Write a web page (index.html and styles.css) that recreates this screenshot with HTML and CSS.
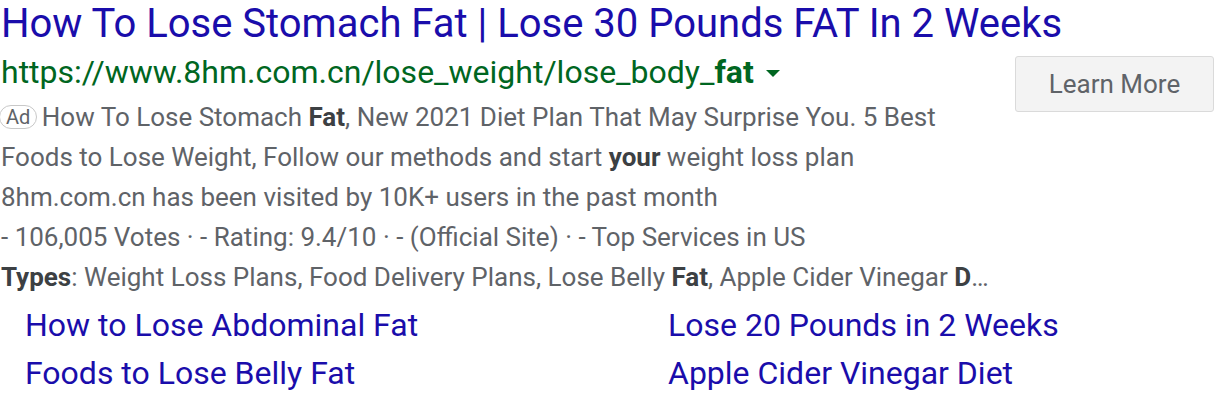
FILE: index.html
```html
<!DOCTYPE html>
<html>
<head>
<meta charset="utf-8">
<link rel="stylesheet" href="styles.css">
</head>
<body>
<div class="ad">
  <a class="title" href="#">How To Lose Stomach Fat | Lose 30 Pounds FAT In 2 Weeks</a>
  <div class="body">
    <div class="main">
      <div class="url">https://www.8hm.com.cn/lose_weight/lose_body_<b>fat</b><span class="caret"></span></div>
      <div class="desc">
        <p class="line"><span class="badge">Ad</span> How To Lose Stomach <b>Fat</b>, New 2021 Diet Plan That May Surprise You. 5 Best<br>Foods to Lose Weight, Follow our methods and start <b>your</b> weight loss plan</p>
        <p class="line">8hm.com.cn has been visited by 10K+ users in the past month</p>
        <p class="line">- 106,005 Votes · - Rating: 9.4/10 · - (Official Site) · - Top Services in US</p>
        <p class="line"><b>Types</b>: Weight Loss Plans, Food Delivery Plans, Lose Belly <b>Fat</b>, Apple Cider Vinegar <b>D</b>…</p>
      </div>
    </div>
    <button class="cta">Learn More</button>
  </div>
  <div class="sitelinks">
    <a href="#">How to Lose Abdominal Fat</a>
    <a href="#">Lose 20 Pounds in 2 Weeks</a>
    <a href="#">Foods to Lose Belly Fat</a>
    <a href="#">Apple Cider Vinegar Diet</a>
  </div>
</div>
</body>
</html>
```
FILE: styles.css
```css
html, body {
  margin: 0;
  padding: 0;
  background: #fff;
}
body {
  font-family: Roboto, "Liberation Sans", sans-serif;
}
.ad {
  padding: 0 0 0 1px;
}
.title {
  display: block;
  color: #1a0dab;
  font-size: 40px;
  line-height: 48px;
  text-decoration: none;
  white-space: nowrap;
}
.body {
  display: flex;
  align-items: flex-start;
  justify-content: space-between;
  margin-top: -1px;
}
.url {
  color: #006621;
  font-size: 32px;
  line-height: 50px;
  display: flex;
  align-items: center;
  white-space: nowrap;
}
.url b { font-weight: 700; }
.caret {
  width: 0;
  height: 0;
  border-left: 7px solid transparent;
  border-right: 7px solid transparent;
  border-top: 7px solid #006621;
  margin-left: 12px;
  margin-top: 3px;
}
.desc { color: #5f6368; font-size: 26px; }
.line {
  margin: 0;
  line-height: 40px;
  white-space: nowrap;
}
.line b { color: #3c4043; font-weight: 700; }
.badge {
  display: inline-block;
  font-size: 20px;
  line-height: 22px;
  padding: 0 6px;
  border: 1px solid #c8c8c8;
  border-radius: 12px;
  color: #5f6368;
  vertical-align: 2px;
  margin-left: -2px;
  margin-right: -2px;
}
.cta {
  margin-top: 9px;
  width: 199px;
  height: 56px;
  background: #f3f3f3;
  border: 1px solid #dadada;
  border-radius: 3px;
  font-family: inherit;
  font-size: 26px;
  color: #5f6368;
  margin-right: 2px;
  flex-shrink: 0;
}
.sitelinks {
  display: grid;
  grid-template-columns: 643px 1fr;
  padding-left: 24px;
  margin-top: 4px;
}
.sitelinks a {
  color: #1a0dab;
  font-size: 32px;
  line-height: 48px;
  text-decoration: none;
}
```
